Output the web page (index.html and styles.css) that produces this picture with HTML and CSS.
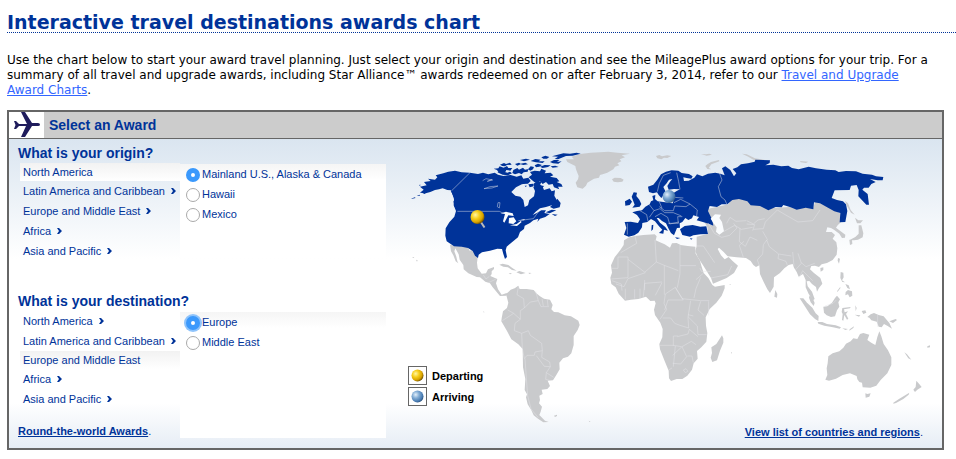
FILE: index.html
```html
<!DOCTYPE html>
<html lang="en">
<head>
<meta charset="utf-8">
<title>Interactive travel destinations awards chart</title>
<link rel="stylesheet" href="styles.css">
</head>
<body>
<svg class="defs" width="0" height="0" aria-hidden="true">
  <defs>
    <radialGradient id="gold" cx="35%" cy="35%" r="70%"><stop offset="0" stop-color="#fff6a8"/><stop offset=".4" stop-color="#f7cf1d"/><stop offset=".75" stop-color="#d9a300"/><stop offset="1" stop-color="#6d4d00"/></radialGradient>
    <radialGradient id="steel" cx="35%" cy="35%" r="70%"><stop offset="0" stop-color="#e3effa"/><stop offset=".4" stop-color="#84aed6"/><stop offset=".8" stop-color="#4a7db3"/><stop offset="1" stop-color="#2c527d"/></radialGradient>
    <symbol id="chevron" viewBox="0 0 5 6"><path d="M0 0h2l3 3-3 3H0l2-3z" fill="#039"/></symbol>
  </defs>
</svg>
<main class="page">
  <h1>Interactive travel destinations awards chart</h1>
  <p class="intro">Use the chart below to start your award travel planning. Just select your origin and destination and see the MileagePlus award options for your trip. For a summary of all travel and upgrade awards, including Star Alliance™ awards redeemed on or after February 3, 2014, refer to our <a href="#">Travel and Upgrade Award Charts</a>.</p>

  <section class="panel">
    <header class="panel-head">
      <span class="plane"><svg viewBox="0 0 35 26" width="35" height="26" aria-hidden="true"><path d="M5 9h2l3 3h8L12 0h4l7 11h6q2 0 2 1.500t-2 1.500h-6l-7 11h-4l5-11h-7l-3 3H5l1.500-4z" fill="#1f1c5c"/></svg></span>
      <h2>Select an Award</h2>
    </header>
    <div class="panel-body">
      <div class="choices">
        <section class="group">
          <h3>What is your origin?</h3>
          <div class="columns">
            <ul class="regions">
              <li class="selected"><button type="button">North America</button></li>
              <li><button type="button">Latin America and Caribbean<svg class="chev"><use href="#chevron"/></svg></button></li>
              <li><button type="button">Europe and Middle East<svg class="chev"><use href="#chevron"/></svg></button></li>
              <li><button type="button">Africa<svg class="chev"><use href="#chevron"/></svg></button></li>
              <li><button type="button">Asia and Pacific<svg class="chev"><use href="#chevron"/></svg></button></li>
            </ul>
            <div class="options">
              <label><input type="radio" name="origin" checked>Mainland U.S., Alaska &amp; Canada</label>
              <label><input type="radio" name="origin">Hawaii</label>
              <label><input type="radio" name="origin">Mexico</label>
            </div>
          </div>
        </section>
        <section class="group last">
          <h3>What is your destination?</h3>
          <div class="columns">
            <div class="side">
              <ul class="regions">
                <li><button type="button">North America<svg class="chev"><use href="#chevron"/></svg></button></li>
                <li><button type="button">Latin America and Caribbean<svg class="chev"><use href="#chevron"/></svg></button></li>
                <li class="selected"><button type="button">Europe and Middle East</button></li>
                <li><button type="button">Africa<svg class="chev"><use href="#chevron"/></svg></button></li>
                <li><button type="button">Asia and Pacific<svg class="chev"><use href="#chevron"/></svg></button></li>
              </ul>
              <p class="more"><a href="#">Round-the-world Awards</a>.</p>
            </div>
            <div class="options">
              <label><input class="focus" type="radio" name="destination" checked>Europe</label>
              <label><input type="radio" name="destination">Middle East</label>
            </div>
          </div>
        </section>
      </div>
      <div class="map">
        <svg class="world" viewBox="400 150 530 275" role="img" aria-label="World map">
          <!-- Unselected land -->
          <g class="land">
            <g transform="translate(400 140) scale(.33333)">
              <path d="M515 50L540 42 572 38 600 37 625 35 652 38 690 41 665 46 675 52 659 58 664 64 652 70 658 76 645 80 640 88 622 98 608 103 600 105 597 113 582 116 572 122 562 128 558 137 548 146 532 142 527 128 534 118 536 108 532 98 528 88 526 78 514 72 502 66 498 58 522 58Z"/>
              <path d="M150 314L165 317 180 318 203 321 209 332 217 330 226 343 233 353 231 368 233 385 245 401 258 400 264 388 282 381 282 387 275 394 275 402 271 408 292 417 288 430 294 448 305 464 318 460 326 461 318 467 300 468 290 456 277 440 270 430 256 425 240 412 230 411 205 400 191 388 190 375 179 359 176 343 166 325 163 334 169 350 172 364 175 370 167 364 160 346 153 334Z"/>
              <path d="M298 374l10-3 17 4 12 9 13 8-14-2-12-8-14-2zM349 397l9-4 19 6-14 4zM326 399l10 1-5 3zM386 398l9 1-8 3zM36 353l5-2 2 3zM48 359l5 2-2 4z"/>
              <path d="M636 118l8-5 18 1 9 5-4 6-14 2-12-2zM768 48l10-3 8 4 16-3 12 2-12 6-10-1-8 5-12-3zM903 42l15 1 10-2 8 3-16 3z"/>
            </g>
            <g transform="translate(470 270) scale(.33333)">
              <path d="M108 72L116 65 122 59 134 55 145 47 149 57 170 57 191 60 199 70 210 79 222 86 240 89 248 105 244 118 252 126 265 127 284 136 303 139 325 152 329 165 323 180 311 198 311 225 304 250 294 260 279 265 268 278 269 298 259 315 249 331 233 332 240 348 232 357 215 359 218 372 208 377 210 390 207 400 216 410 212 425 208 435 225 452 236 456 220 457 204 446 191 436 184 421 173 403 168 382 171 373 164 360 166 327 159 292 158 237 145 223 124 208 111 183 94 154 95 145 99 124 111 114 115 98Z"/>
              <path d="M252 437l9-3 0 4-6 3zM356 452l6 3-4 1zM40 124l4 3-4 0z"/>
            </g>
            <g transform="translate(600 140) scale(.33333)">
              <path d="M318 208L350 201 385 193 396 178 425 173 450 182 506 205 580 200 640 203 646 183 680 196 703 210 720 220 724 245 713 256 708 263 722 274 736 284 735 293 726 294 718 281 703 270 693 264 682 262 678 276 695 276 705 285 698 296 709 307 712 325 710 344 698 360 681 369 665 373 657 381 645 377 634 378 630 388 642 399 661 414 667 431 657 444 651 455 648 441 636 432 628 423 620 424 623 439 636 455 644 477 640 480 626 462 617 442 617 420 609 402 596 410 590 396 582 383 578 372 566 375 553 385 540 399 522 412 521 440 510 459 502 448 491 426 480 402 478 376 468 381 460 375 452 363 438 354 410 352 383 349 371 336 357 323 353 327 363 346 374 358 386 351 397 362 414 377 402 399 380 414 339 431 333 414 311 379 293 351 286 334 290 318 290 290 324 281 322 262 312 244 326 252 340 257Z"/>
              <path d="M526 450l6 12-1 11-8-3zM735 182l9 8 8 20 12 14-11-6-12-20zM765 233l10 8 14 0-8 9-10 0zM776 256l8 0 6 24-2 12-14 7-12 2-12-2 16-8 10-10zM748 299l8 1 1 12-7 3zM714 354l6 2-3 15-4-9zM661 384l9-2 0 8-8 5zM316 78L323 72 333 66 357 60 358 64 334 73 326 84 334 88 322 87zM426 41l14 2 25 12 30 5-10 3-25-4-15-9zM600 63l25 2-7 4-16-2zM36 334l4 3zM388 433l6 0-4 2z"/>
            </g>
            <g transform="translate(600 220) scale(.33333)">
              <path d="M88 52L105 48 130 45 164 43 170 49 167 61 180 67 194 73 210 83 216 70 230 69 242 75 263 78 286 80 287 101 300 122 305 140 311 159 325 174 337 195 345 200 374 195 374 205 365 227 349 248 329 267 317 292 318 317 322 339 319 365 304 382 291 393 293 416 281 430 276 449 262 467 247 477 230 477 213 483 207 475 206 452 193 421 180 388 178 372 187 352 188 327 181 308 165 285 162 269 167 250 164 242 151 243 138 230 115 237 93 239 75 242 56 221 47 202 34 192 31 173 36 158 33 136 44 112 61 90 71 75 72 61Z"/>
              <path d="M366 346l4 9 0 13-10 24-9 29-14 5-5-13 4-14-2-17 15-10zM393 397l3 0-2 5z"/>
            </g>
            <g transform="translate(780 250) scale(.33333)">
              <path d="M59 145L70 145 81 158 97 173 107 190 116 198 115 213 105 207 90 193 76 171zM113 216l14 0 14 6 26 4 16 6-4 4-20-4-26-5-18-6zM130 170l12-1 14-11 9-14 6-7 9 11-5 9 3 13-7 11-6 18-12 2-13-5-8-8zM89 136l9 8 6 15-3 9-9-11-5-14zM182 66l8 2 1 14-5 9 9 6-8-1-6-12zM197 126l7-6 12 4 1 13-8 5-5-9-8 3zM171 124l9-12 2 1-9 12zM196 102l10 4 4 12-8-4zM187 174l25-3-2 4-18 3 2 9 10-3-6 8 7 14-4 3-8-14-3 17-4-2 2-18-3-6zM226 166l4 8-3 10zM224 194l17 2-4 4zM245 183l11-2 3 7-9 4zM262 201l10-8 10-4 14 6 15 4 10 12 7 8 8 17-13-8-11-6-7 10-9-2-6-15-16-4-6-8zM328 214l19-7 4 3-12 9zM354 205l8 6zM364 217l7 3zM376 225l8 5zM187 235l17 2-8 3zM209 238l13-9-2 5-12 8z"/>
            </g>
            <g transform="translate(780 300) scale(.33333)">
              <path d="M145 169L158 160 178 154 190 143 198 131 212 124 220 115 232 117 240 102 250 99 268 104 262 120 275 129 286 135 292 111 298 94 304 109 311 132 324 151 334 172 334 195 322 220 302 240 289 257 271 263 248 262 246 248 238 246 232 238 230 228 210 220 188 225 168 236 147 242 136 239 142 225 140 205 143 190ZM256 280l6 2 10-2-4 10-11 3zM340 308l18-12 30-18-2 6-16 13-22 12-8 2zM409 242l8 9 8 10-13 8-7 7-5-7 7-8zM373 157l8 6 13 16-9-4zM442 139l10-4 0 6-10 2zM452 130l7-1-5 5zM396 84l6 8zM401 104l5 10zM402 119l8 6zM380 72l8 6z"/>
            </g>
          </g>
          <!-- Selected regions -->
          <g class="active">
            <g transform="translate(400 140) scale(.33333)">
              <path d="M60 158L71 149 60 140 80 136 72 126 92 123 84 116 105 119 112 112 107 106 130 100 145 95 165 92 185 97 210 98 234 102 249 98 265 103 284 98 294 104 310 108 332 105 350 110 364 106 370 116 385 113 392 123 384 131 367 132 348 142 334 156 346 167 361 170 370 180 374 201 384 196 388 180 402 169 405 153 400 142 415 130 428 140 432 150 449 145 455 154 465 151 463 167 473 185 460 194 438 201 420 205 407 215 398 225 410 219 424 211 438 211 433 219 449 222 436 231 420 236 412 246 415 236 400 241 390 249 374 257 372 267 360 276 354 292 334 308 320 320 317 331 321 351 315 357 310 342 306 327 292 326 270 332 246 337 236 344 234 354 225 347 218 333 204 324 185 320 162 319 140 304 136 287 137 265 148 247 163 230 168 213 161 196 162 177 157 162 153 151 142 150 128 145 117 148 105 150 91 156 77 160Z"/>
              <path d="M386 112l10-8-6-8 14-4 16 2 4-8 14 6-4 8 18-2 8 8-10 4 20 4 8 10-8 2 14 6 4 8-14 0 4 8-16-6-4-10-12 2-8-8-10 6-8-8-12 6-8-6zM410 124l14 2-4 10 12 2-6 8-14-6-8 4-4-12zM281 86l14-1 4-6 12 4 10-5 4 6 12 0-6 8-12-2-4 8-10-4-10 2-4-6zM300 74l12-5 6 3 12-4 5 6-14 1-6 4-8-1zM292 97l14-4 16 5 8-3 6 5-12 6-16-2zM345 72l12-4 5 3 14-3 8 5-14 2-8-2-10 4zM340 90l12-6 5 5 12-6 6 6 10-2-2 8-12 2-6 6-8-4-12 4-8-4zM384 88l8-9 10 2-3 7-8 4zM404 76l10-5 12 4-8 5-10 2zM360 60l18-4 12 3-18 5zM392 63l14-6 16 2-6 5 18 0-6 5-20-2zM424 52l12-5 12 4-7 5-11 0zM450 66l12-6 16 0-7 6 14-2-10 7-16-1zM456 49l34-9 20 1 20-3 12 3-24 6-20 1-24 10-10-1 10-7zM420 80l14-5 18 1-8 5-16 3zM452 79l14-2 10 4-18 2zM352 122l20-5 12 8-16 8zM374 137l7 0-4 4zM385 133l14-2 2 8-12 3zM462 190l10-14 10 13-3 13-18 4-11-5zM437 217l18-8 14 2-20 9zM455 222l18 2-8 4zM152 152l8 2 8 15-6 3zM160 182l6 6 4 15-6-2zM166 203l10 4 5 13-8-2zM67 161l10-3-2 4zM50 168l9-4 1 3zM32 177l12-5 3 2zM20 183l8-3zM4 189l4-2zM56 135l6-1-2 3z"/>
            </g>
            <g transform="translate(600 140) scale(.33333)">
              <path d="M72 284L79 264 74 246 92 245 114 249 120 238 111 225 97 217 111 213 126 211 136 200 149 193 153 184 160 181 157 168 166 165 165 177 173 184 190 186 218 190 222 176 216 162 230 153 240 148 222 147 206 149 202 138 210 125 217 117 207 119 200 130 190 141 196 153 193 163 184 174 176 165 171 157 159 160 147 156 144 140 160 134 172 119 183 103 198 95 215 91 235 92 245 99 267 102 278 109 274 116 260 114 250 112 252 123 266 122 283 113 291 103 307 109 324 101 346 98 361 101 374 106 366 85 376 79 391 90 402 109 409 100 398 87 412 82 423 73 444 70 464 65 466 59 488 60 510 61 509 69 496 76 520 74 544 79 565 77 576 84 596 88 614 83 626 80 648 85 680 89 706 91 716 96 738 93 768 94 788 101 816 104 828 109 850 111 848 121 833 121 810 117 827 126 814 132 806 143 792 143 787 149 803 162 807 194 799 194 775 169 776 150 770 135 753 137 749 150 704 151 695 174 711 180 729 184 738 193 742 213 736 246 719 247 721 219 703 214 684 203 660 190 642 187 640 208 617 203 590 209 572 202 550 195 545 202 527 201 505 211 480 198 452 196 442 184 417 177 397 180 382 193 365 193 351 201 329 198 324 213 337 240 340 257 326 251 306 245 290 241 297 231 280 226 276 235 265 240 256 234 247 246 239 250 240 263 231 264 222 286 213 279 205 265 198 250 186 243 176 234 170 234 180 248 196 261 204 272 192 269 190 281 177 279 187 269 177 259 165 244 153 237 142 246 127 249 126 262 115 278 103 286 86 290Z"/>
              <path d="M240 268L254 258 278 255 301 260 319 259 324 282 302 283 280 286 270 290 247 285zM101 157l10 1-2 10 9 11 6 13-5 8-22 3 7-9-4-10-5-14zM75 184l14-8 7 9-7 10-13 2zM155 256l5-2-1 14-5 5zM225 292l16 2-10 3zM270 294l8 2-5 3z"/>
            </g>
          </g>
          <!-- Inland water -->
          <g class="water" transform="translate(400 140) scale(.33333)">
            <path d="M302 220l16-5 20 5 3 8-16-2-12 22-4-4 6-22zM327 234l14-2 8 12-9 8-14-2zM330 256l20-4 12-9 3 3-14 12zM358 241l17-4-3 4z"/>
          </g>
          <g class="water" transform="translate(600 140) scale(.33333)">
            <path d="M332 236L345 223 363 224 358 234 366 246 372 274 358 284 348 275 350 262 340 249z"/>
          </g>
          <!-- Borders -->
          <g class="borders">
            <g transform="translate(400 140) scale(.33333)"><path d="M210 98L155 152M172 214H298l12 6M355 242L400 236 418 212M248 122l10-6 20 4-16 4 14-6M252 146l18-6 24-2-18 6zM294 188l6 0-2 16-6-4zM250 405l8 12 10-8M265 428l22-10"/></g>
            <g transform="translate(600 140) scale(.33333)"><path d="M172 155L178 130 190 106 212 98M230 98L236 125 240 148M358 98L366 120 355 140 363 170 375 180 380 192M222 172l28 2M222 188l20-10 28 14-12 8-34-2-4 14-26 0-16-12M270 192l22 18-2 18M148 194l14 18-14 20M162 212l18-6 14 12 26 0 24 10M165 230l18-10 20 12 6 20 28-6M205 250l30 0-2-20 14 0M186 205l-8-20M120 212l20 12 4 20M82 250l0 34M325 250l18 30 22 12 24-6 22-22-10-14M372 274l32-18 20 12 34-6M380 250l10-18 18 12 30-2M420 265l-2 40 18 14 14-28 22 10M290 318l20 0 34 50M430 352l-12-36 14-12M440 242l20 10 14-12 20-4M440 252l24 2-6 18M478 376l-6-16 16-18 2-28 12-16-14-24M460 268l30-2 6-20 26-26M522 220l10-10 20 12 42 24 44-4 22-32M500 300l8 20 28 22 38 6M536 342l-2 14 24 8 4 12M578 336l4 42M594 340l10 30-18 20M604 368l14 12 26-10M598 412l10-20 30 30M300 384l4 10 28 0M333 414l50-10 12-26"/></g>
            <g transform="translate(600 220) scale(.33333)"><path d="M105 48l5 22-48 28M36 145h18v-34h30v62l-50 4M84 118l52 40-52 18-12 24-24-8M165 60l4 66 24 10 0 50 0 38M169 126l-34 30M240 75l0 62 48 0M240 137l0 24-8 42M193 136l42 16M36 182l28 10 2 20M76 206l0 32M104 208v28M120 206v30M130 230l4-40 52-4M186 188l-20 38M134 180l0 30M196 222l30-20 20 34 56 6 26 0M196 222l-4 28 8 18-20 30M226 202l24 38-46 0-10 30M288 206l14-34M288 206l-6 28M311 159l-23 20M302 244l-8 26 18 16M326 244l0 42M272 242l-8 50 2 32-26-8-16-6-12-16-24 0M264 284l16 4M264 290l28 28 2 26 26 0M180 376h40l24 4M226 378l-6 62M220 378v-30h14M232 350l32-8 4-14M268 328l26 22M218 406l28-26 14 30-18 22-24-2M216 444l-10 6M246 380l28-16 14 10M262 408l14 0 4 20M250 450l8-4 6 8-8 4z"/></g>
            <g transform="translate(470 270) scale(.33333)"><path d="M145 50l-4 24 20 12 2 28 18-18 24-4-8-28M205 92l8 18 24 0M216 86l4 22M232 88l2 20M163 114l-12 8 0 26-20-18-18-10M131 130l-34 22M151 148l-16 12-2 22 22 8M155 190l20-8 6 14 34 24 2 22-22 4-2 10-22 0-8 10-6-30-2-46M165 265l4 60 4 52 10 40 22 26M217 242l-2 20 24 14 2 14-18-1-24-32M241 290l-12 18-2 20 14 4M229 308l22 14"/></g>
            <g transform="translate(780 250) scale(.33333)"><path d="M293 195v35M135 168l24-8 10-10"/></g>
          </g>
          <path d="M480.500 221.500l4 6" stroke="#bbb" stroke-width="2"/><circle cx="477.500" cy="217" r="7" fill="url(#gold)"/>
          <circle cx="669" cy="196.500" r="6.500" fill="url(#steel)"/>
        </svg>
        <ul class="legend">
          <li><svg viewBox="0 0 19 19" aria-hidden="true"><rect x=".5" y=".5" width="18" height="18" fill="#fff" stroke="#666"/><circle cx="9.500" cy="9.500" r="6" fill="url(#gold)"/></svg>Departing</li>
          <li><svg viewBox="0 0 19 19" aria-hidden="true"><rect x=".5" y=".5" width="18" height="18" fill="#fff" stroke="#666"/><circle cx="9.500" cy="9.500" r="6" fill="url(#steel)"/></svg>Arriving</li>
        </ul>
        <p class="more right"><a href="#">View list of countries and regions</a>.</p>
      </div>
    </div>
  </section>
</main>
</body>
</html>
```
FILE: styles.css
```css
* { box-sizing: border-box; }
body { margin: 0; background: #fff; color: #000; font-family: "Liberation Sans", Arial, sans-serif; font-size: 11px; }
h1, h2, h3, p, ul { margin: 0; padding: 0; }
ul { list-style: none; }
.defs { position: absolute; }
.page { padding: 10px 0 8px 7px; }

h1 { height: 23px; border-bottom: 1px dotted #039; color: #039; font: bold 19px/24px Verdana, "DejaVu Sans", sans-serif; white-space: nowrap; }
.intro { margin: 20px 20px 12px 0; font: 12px/15px Verdana, "DejaVu Sans", sans-serif; }
.intro a { color: #36f; }

.panel { margin-right: 12px; border: 2px solid #666; }
.panel-head { display: flex; align-items: center; gap: 5px; height: 27px; background: #ccc; border-bottom: 1px solid #666; }
.plane { display: flex; width: 35px; height: 26px; background: #fff; }
.panel-head h2 { color: #039; font-size: 14px; line-height: 26px; }

.panel-body { display: flex; min-height: 309px; padding-top: 3px; background: linear-gradient(#dae5f0, #fff 120px, #fff calc(100% - 45px), #e6edf5); }
.choices { flex: 0 0 391px; }
.group { min-height: 148px; }
h3 { padding-left: 9px; color: #039; font-size: 14px; line-height: 22px; height: 21px; }
.columns { display: grid; grid-template-columns: 160px 206px; padding-left: 11px; }
.regions button { display: flex; align-items: center; gap: 6px; height: 20px; padding: 0 0 0 3px; border: 0; background: none; color: #039; font: 11px "Liberation Sans", Arial, sans-serif; white-space: nowrap; }
.regions .selected { background: linear-gradient(#f2f2f2, #fff); }
.regions .selected button { height: 18px; }
.chev { width: 5px; height: 6px; }
.options { height: 94px; margin-top: 1px; background: linear-gradient(#f5f5f5, #fff 16px); }
.last .options { height: 126px; }
.options label { display: flex; align-items: center; gap: 2px; height: 20px; padding-left: 6px; color: #039; }
input { flex: none; width: 14px; height: 14px; margin: 2px 0 0; appearance: none; border: 1px solid #aaa; border-radius: 50%; background: #fff; }
input:checked { border: 5px solid #3b99fc; }
.focus { box-shadow: 0 0 0 2px #8ec3fb; }

.side { display: flex; flex-direction: column; justify-content: space-between; }
.more { color: #039; line-height: 14px; white-space: nowrap; }
.more a { color: #039; font-weight: bold; }
.side .more { margin-left: -2px; }
.map { position: relative; flex: 1; padding: 8px 12px 0 0; }
.world { display: block; width: 100%; }
.more.right { padding-right: 7px; text-align: right; }
.legend { position: absolute; left: 8px; top: 223px; color: #000; font-weight: bold; }
.legend li { display: flex; align-items: center; gap: 5px; height: 21px; }
.legend svg { width: 19px; height: 19px; }

.land path { fill: #c9cacc; }
.active path { fill: #039; }
.water path { fill: #fafcfe; }
.borders path { fill: none; stroke: #e4e6ea; stroke-width: 2; opacity: .7; }
```
